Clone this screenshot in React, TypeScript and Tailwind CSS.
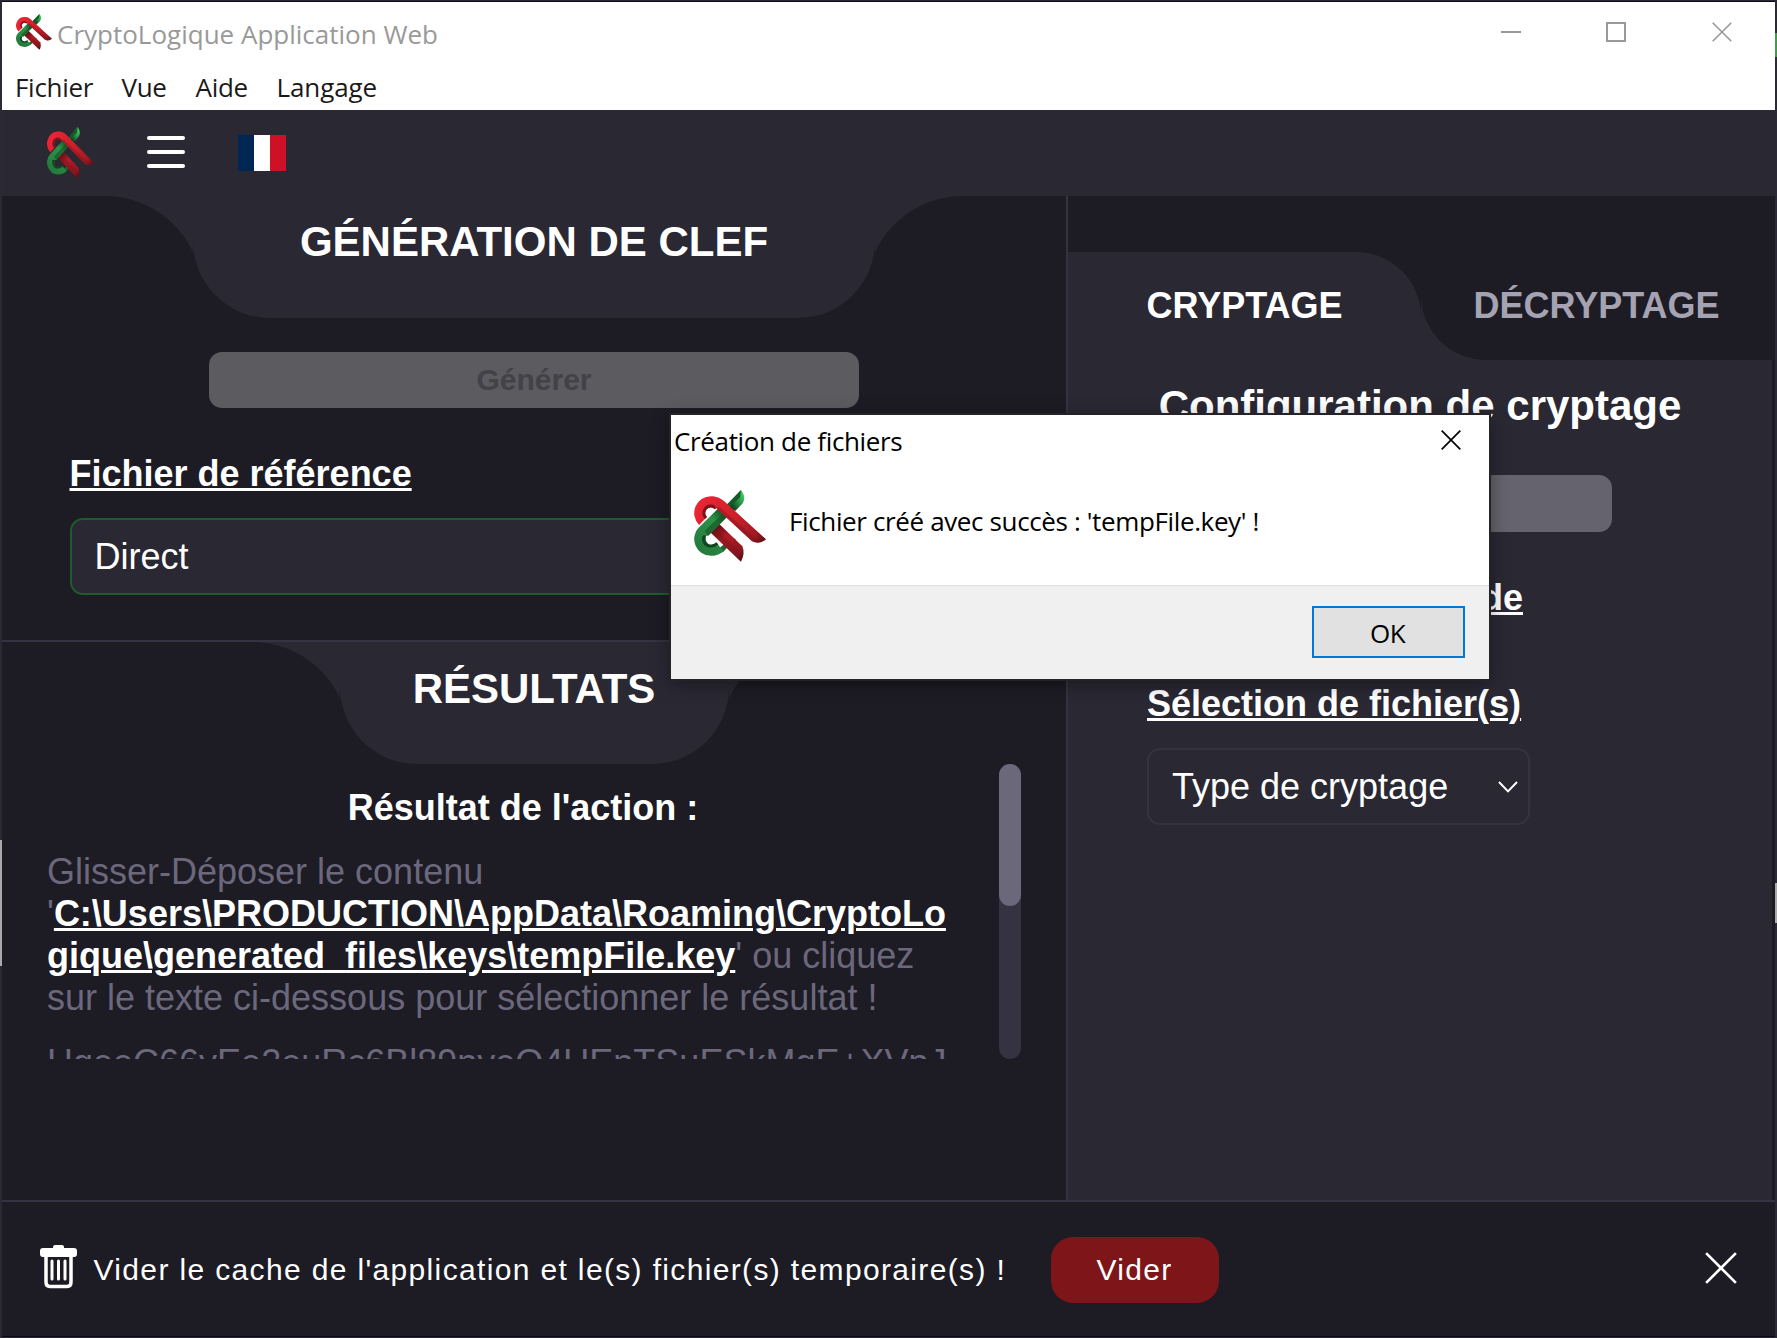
import React from "react";

const Logo = ({ className, id }: { className: string; id: string }) => (
  <svg viewBox="102 240 216 216" preserveAspectRatio="none" className={className} fill="none">
    <defs>
      <linearGradient id={id + "r"} x1="110" y1="270" x2="315" y2="395" gradientUnits="userSpaceOnUse">
        <stop offset="0" stopColor="#ee2535" />
        <stop offset="0.5" stopColor="#cf1f2b" />
        <stop offset="0.85" stopColor="#a01a22" />
        <stop offset="1" stopColor="#5a0f13" />
      </linearGradient>
      <linearGradient id={id + "l"} x1="165" y1="350" x2="248" y2="440" gradientUnits="userSpaceOnUse">
        <stop offset="0" stopColor="#5a0d12" />
        <stop offset="0.35" stopColor="#b01c26" />
        <stop offset="0.85" stopColor="#8f171e" />
        <stop offset="1" stopColor="#5a0f13" />
      </linearGradient>
      <linearGradient id={id + "t"} x1="252" y1="262" x2="212" y2="290" gradientUnits="userSpaceOnUse">
        <stop offset="0" stopColor="#3cc45c" />
        <stop offset="0.5" stopColor="#258542" />
        <stop offset="1" stopColor="#0d3a1b" />
      </linearGradient>
      <linearGradient id={id + "g"} x1="205" y1="310" x2="120" y2="420" gradientUnits="userSpaceOnUse">
        <stop offset="0" stopColor="#124a22" />
        <stop offset="0.3" stopColor="#2c9347" />
        <stop offset="1" stopColor="#257a3c" />
      </linearGradient>
    </defs>
    <path d="M243 240C254 254 256 268 247 281L226 303L197 288Z" fill={`url(#${id}t)`} />
    <path d="M243 240L240 262L206 294L197 288Z" fill="#15592a" />
    <path d="M129 333A34 34 0 0 1 153 275Q168 275 178 285" stroke={`url(#${id}r)`} strokeWidth="33" />
    <path d="M138 324A21 21 0 0 1 153 288Q160 288 167 294" stroke="#7d121a" strokeWidth="9" />
    <path d="M129 363A34 34 0 0 0 153 421Q172 421 186 408L214 384L228 387L210 404L190 425L160 437Z" fill="#1c6631" />
    <path d="M129 363A34 34 0 0 0 153 421Q168 421 180 411" stroke={`url(#${id}g)`} strokeWidth="33" />
    <path d="M137 372A21 21 0 0 0 153 408Q163 408 172 400" stroke="#12451f" strokeWidth="9" />
    <circle cx="153" cy="387" r="16" className="fill-[#2a2833] in-[.on-white]:fill-white" />
    <path d="M177 341L247 409Q256 430 243 455L151 367Z" fill={`url(#${id}l)`} />
    <path d="M164 354L235 420L243 455L151 367Z" fill="#7a131a" fillOpacity="0.45" />
    <path d="M118 351L188 282L222 300L145 377L126 376Z" fill={`url(#${id}g)`} />
    <path d="M134 363L207 292L222 300L145 377Z" fill="#0f4420" fillOpacity="0.5" />
    <path d="M156 260Q178 260 193 274L318 388Q297 405 276 394L166 292Z" fill={`url(#${id}r)`} />
    <path d="M180 292L292 390L318 388Q297 405 276 394L166 292Z" fill="#6d1117" fillOpacity="0.35" />
  </svg>
);

const Cross = ({ className, w }: { className: string; w: number }) => (
  <svg viewBox="0 0 20 20" className={className} stroke="currentColor" strokeWidth={w} fill="none">
    <path d="M0.7 0.7L19.3 19.3M19.3 0.7L0.7 19.3" />
  </svg>
);

const SectionTitle = ({ children, className }: { children: React.ReactNode; className: string }) => (
  <div className="flex h-[122px] justify-center">
    <div className="h-[80px] w-[88px] bg-[radial-gradient(circle_at_0_97px,#1d1b24_96.5px,#2a2833_97.5px)]" />
    <h2 className={`${className} rounded-b-[77px] bg-[#2a2833] text-center text-[42px] leading-[42px] font-bold`}>
      {children}
    </h2>
    <div className="h-[80px] w-[88px] bg-[radial-gradient(circle_at_100%_97px,#1d1b24_96.5px,#2a2833_97.5px)]" />
  </div>
);

const Label = ({ children, className = "" }: { children: React.ReactNode; className?: string }) => (
  <div className={`${className} text-[36px] leading-[42px] font-bold underline decoration-[3px] underline-offset-[2px]`}>
    {children}
  </div>
);

const TitleBar = () => (
  <div className="on-white flex h-[64px] pl-[14px] text-[#999]">
    <Logo id="a" className="mt-3 h-9 w-9" />
    <div className="ml-[5px] mt-[12px] flex-1 text-[26px] leading-[40px]">CryptoLogique Application Web</div>
    <div className="mt-[29px] h-[2px] w-5 bg-[#999]" />
    <div className="mt-5 ml-[85px] h-5 w-5 border-2 border-[#999]" />
    <Cross w={1.6} className="mt-5 mr-[43px] ml-[86px] h-5 w-5" />
  </div>
);

const MenuBar = () => (
  <div className="flex h-[44px] pl-[13px] text-[26px] leading-[42px] tracking-[-0.3px] text-[#1a1a1a]">
    <span className="w-[106.500px]">Fichier</span>
    <span className="w-[74px]">Vue</span>
    <span className="w-[81px]">Aide</span>
    <span className="tracking-[-0.1px]">Langage</span>
  </div>
);

const Header = () => (
  <div className="flex h-[86px] bg-[#2a2833]">
    <Logo id="b" className="mt-[17px] ml-[45px] h-[52px] w-[47px]" />
    <div className="mt-[26px] ml-[53px] flex w-[38px] flex-col gap-[10px]">
      <div className="h-1 rounded-full bg-white" />
      <div className="h-1 rounded-full bg-white" />
      <div className="h-1 rounded-full bg-white" />
    </div>
    <div className="mt-[25px] ml-[53px] flex h-9 w-12">
      <div className="flex-1 bg-[#002654]" />
      <div className="flex-1 bg-white" />
      <div className="flex-1 bg-[#ce1126]" />
    </div>
  </div>
);

const KeyPanel = () => (
  <div className="h-[444px]">
    <SectionTitle className="w-[682px] pt-[25px]">GÉNÉRATION DE CLEF</SectionTitle>
    <div className="mx-auto mt-[34px] h-14 w-[650px] rounded-[13px] bg-[#5c5b60] text-center text-[30px] leading-[55px] font-bold text-[#434247]">
      Générer
    </div>
    <Label className="mt-[45px] ml-[67.500px]">Fichier de référence</Label>
    <div className="mx-[68px] mt-[23px] h-[77px] rounded-[13px] border-2 border-[#1f5c2b] bg-[#2a2833] pl-[22.500px] text-[36px] leading-[73px]">
      Direct
    </div>
  </div>
);

const ResultPanel = () => (
  <div className="h-[560px] border-t-2 border-[#353341]">
    <SectionTitle className="w-[389px] pt-[26px]">RÉSULTATS</SectionTitle>
    <div className="ml-[45px] flex h-[295px] w-[974px] overflow-hidden">
      <div className="w-[952px] pt-[23px] text-[36px] leading-[42px] text-[#6c687c]">
        <h3 className="text-center font-bold text-white">Résultat de l'action :</h3>
        <p className="mt-[22px] whitespace-nowrap">
          Glisser-Déposer le contenu
          <br />'
          <b className="text-white underline decoration-[3px] underline-offset-[2px]">
            C:\Users\PRODUCTION\AppData\Roaming\CryptoLo
            <br />
            gique\generated<span className="[text-decoration-skip-ink:none]">_</span>files\keys\tempFile.key
          </b>
          ' ou cliquez
          <br />
          sur le texte ci-dessous pour sélectionner le résultat !
        </p>
        <p className="mt-[23px] whitespace-nowrap">HgeeC66yEe2euRc6Bl89nyeO4UEnTSuESkMgE+XVpJ</p>
      </div>
      <div className="w-[22px] rounded-full bg-[#353341]">
        <div className="h-[142px] rounded-full bg-[#6c687c]" />
      </div>
    </div>
  </div>
);

const CryptPanel = () => (
  <div className="flex w-[704px] flex-col bg-[#2a2833]">
    <div className="h-[56px] bg-[#1d1b24]" />
    <div className="flex h-[108px] text-center text-[36px] leading-[107px] font-bold">
      <div className="w-[353px] bg-[#1d1b24]">
        <div className="h-full rounded-tr-[65px] bg-[#2a2833]">CRYPTAGE</div>
      </div>
      <div className="flex-1">
        <div className="h-full rounded-bl-[65px] bg-[#1d1b24] text-[#a5a2b2]">DÉCRYPTAGE</div>
      </div>
    </div>
    <h2 className="mt-[25px] text-center text-[42px] leading-[42px] font-bold">Configuration de cryptage</h2>
    <div className="mt-[48px] ml-[160px] h-[57px] w-[384px] rounded-[13px] bg-[#65636d]" />
    <Label className="mt-[45px] ml-[79px] w-[376px] text-right">de</Label>
    <Label className="mt-[64px] ml-[79px]">Sélection de fichier(s)</Label>
    <div className="mt-[23px] ml-[79px] flex h-[77px] w-[383px] items-center rounded-[13px] border-2 border-[#353341] pl-[23px] text-[36px]">
      <span className="flex-1">Type de cryptage</span>
      <svg viewBox="0 0 20 12" className="mr-[10px] h-3 w-5" fill="none" stroke="#fff" strokeWidth="2">
        <path d="M1 1L10 10.4L19 1" />
      </svg>
    </div>
  </div>
);

const Footer = () => (
  <div className="flex h-[136px] items-center border-t-2 border-[#353341] pl-[38px] text-[30px] tracking-[1.35px]">
    <svg viewBox="0 0 37 44" className="-mt-1 h-11 w-[37px]" fill="#fff">
      <path d="M13 2Q13 0 15 0H22Q24 0 24 2V3H34Q37 3 37 6V9Q37 12 34 12H3Q0 12 0 9V6Q0 3 3 3H13Z" />
      <path d="M6 10V37Q6 41.500 10 41.500H27Q31 41.500 31 37V10" fill="none" stroke="#fff" strokeWidth="3.500" />
      <path d="M12 16V34M18.500 16V34M25 16V34" stroke="#fff" strokeWidth="3" strokeLinecap="round" />
    </svg>
    <span className="ml-[16.500px] w-[957.500px]">Vider le cache de l'application et le(s) fichier(s) temporaire(s) !</span>
    <div className="mt-[2px] h-[66px] w-[168px] rounded-[22px] bg-[#7d1519] pr-px text-center leading-[65px]">Vider</div>
    <Cross w={1.7} className="-mt-[2px] mr-[38px] ml-auto h-8 w-8" />
  </div>
);

const Dialog = () => (
  <div className="on-white absolute top-[415px] left-[671px] flex h-[264px] w-[818px] flex-col bg-white font-['Open_Sans',sans-serif] text-[26px] text-black shadow-[0_0_0_2px_#242328,0_4px_18px_rgba(0,0,0,0.45)]">
    <div className="flex h-[52px] justify-between pl-[3px] leading-[53px] tracking-[-0.35px]">
      <span>Création de fichiers</span>
      <Cross w={1.7} className="mt-[15px] mr-7 h-5 w-5" />
    </div>
    <div className="flex h-[118px] pl-[23px]">
      <Logo id="c" className="mt-[23px] h-[72px] w-[72px]" />
      <span className="pl-[23px] leading-[109px] tracking-[-0.37px]">Fichier créé avec succès : 'tempFile.key' !</span>
    </div>
    <div className="flex flex-1 justify-end border-t border-[#dfdfdf] bg-[#f0f0f0] pt-5 pr-6">
      <div className="h-[52px] w-[153px] border-2 border-[#0078d7] bg-[#e1e1e1] pr-[2px] text-center leading-[51px] tracking-[-0.5px]">OK</div>
    </div>
  </div>
);

export default function App() {
  return (
    <div className="relative h-[1338px] w-[1777px] overflow-hidden bg-[#2b2935] p-[2px] pt-px font-['Liberation_Sans',Arial,sans-serif] text-white">
      <div className="flex h-[1336px] flex-col border-y border-[#0b0a1c] bg-[#1d1b24]">
        <div className="bg-white font-['Open_Sans',sans-serif]">
          <TitleBar />
          <MenuBar />
        </div>
        <Header />
        <div className="flex h-[1004px]">
          <div className="w-[1066px] border-r-2 border-[#353341]">
            <KeyPanel />
            <ResultPanel />
          </div>
          <CryptPanel />
        </div>
        <Footer />
      </div>
      <div className="absolute top-[840px] left-0 h-[126px] w-[2px] bg-[#aaa]" />
      <div className="absolute top-[33px] right-0 h-6 w-[2px] bg-[#3f9a4a]" />
      <div className="absolute top-[883px] right-0 h-10 w-[2px] bg-[#aaa]" />
      <Dialog />
    </div>
  );
}
